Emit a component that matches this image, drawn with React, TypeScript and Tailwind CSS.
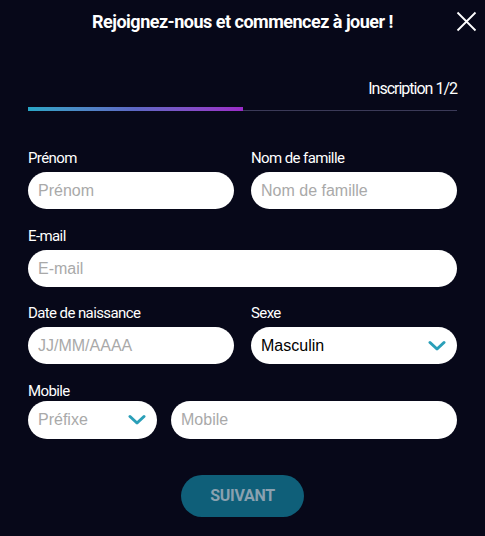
import React, { useState } from "react";

const label = "text-[15px] leading-[18px] tracking-[-0.6px] text-white";
const field =
  "rounded-full bg-white px-[10px] text-[16px] text-black placeholder:text-[#a9a9a9] outline-none [font-family:'Liberation_Sans',Arial,sans-serif]";

function Chevron() {
  return (
    <svg width="18" height="12" viewBox="0 0 18 12" className="shrink-0">
      <path d="M2 2.5 L9 9 L16 2.5" fill="none" stroke="#2a9fb8" strokeWidth="3" strokeLinecap="round" strokeLinejoin="round" />
    </svg>
  );
}

export default function App() {
  const [sexe] = useState("Masculin");

  return (
    <div className="h-[536px] w-[485px] overflow-hidden bg-[#070819] px-[28px] [font-family:Roboto,'Liberation_Sans',sans-serif]">
      {/* header */}
      <div className="relative flex h-[42px] items-center justify-center">
        <h1 className="text-[18px] font-bold tracking-[-0.5px] text-white">Rejoignez-nous et commencez à jouer !</h1>
        <button className="absolute right-[-20px] top-[11px]">
          <svg width="21" height="21" viewBox="0 0 21 21">
            <path d="M1.5 1.5 L19.5 19.5 M19.5 1.5 L1.5 19.5" stroke="white" strokeWidth="1.8" />
          </svg>
        </button>
      </div>

      {/* steps */}
      <div className="mt-[37px] flex justify-end text-[16px] leading-[20px] tracking-[-1px] text-white">Inscription 1/2</div>
      <div className="mt-[8px] flex items-end">
        <div className="h-[4px] w-[215px] bg-gradient-to-r from-[#27a6c6] via-[#5d67c4] to-[#9a2ac8]" />
        <div className="h-px flex-1 bg-[#3b3a58]" />
      </div>

      <form className="mt-[38px] flex flex-col">
        <div className="grid grid-cols-2 gap-x-[17px]">
          <div className="flex flex-col gap-[5px]">
            <span className={label}>Prénom</span>
            <input className={field + " h-[37px] w-full"} placeholder="Prénom" />
          </div>
          <div className="flex flex-col gap-[5px]">
            <span className={label}>Nom de famille</span>
            <input className={field + " h-[37px] w-full"} placeholder="Nom de famille" />
          </div>
        </div>

        <div className="mt-[18px] flex flex-col gap-[5px]">
          <span className={label}>E-mail</span>
          <input className={field + " h-[37px] w-full"} placeholder="E-mail" />
        </div>

        <div className="mt-[17px] grid grid-cols-2 gap-x-[17px]">
          <div className="flex flex-col gap-[5px]">
            <span className={label}>Date de naissance</span>
            <input className={field + " h-[37px] w-full"} placeholder="JJ/MM/AAAA" />
          </div>
          <div className="flex flex-col gap-[5px]">
            <span className={label}>Sexe</span>
            <div className={field + " flex h-[37px] w-full items-center justify-between pr-[11px]"}>
              <span>{sexe}</span>
              <Chevron />
            </div>
          </div>
        </div>

        <div className="mt-[18px] flex flex-col gap-[1px]">
          <span className={label}>Mobile</span>
          <div className="flex gap-[14px]">
            <div className={field + " flex h-[38px] w-[129px] shrink-0 items-center justify-between pr-[11px]"}>
              <span className="text-[#a9a9a9]">Préfixe</span>
              <Chevron />
            </div>
            <input className={field + " h-[38px] min-w-0 flex-1"} placeholder="Mobile" />
          </div>
        </div>

        <div className="mt-[36px] flex justify-center">
          <button type="button" className="h-[42px] w-[123px] rounded-full bg-[#0f5f79] text-[16px] font-bold tracking-[-0.3px] text-[#8aa1b0]">
            SUIVANT
          </button>
        </div>
      </form>
    </div>
  );
}
